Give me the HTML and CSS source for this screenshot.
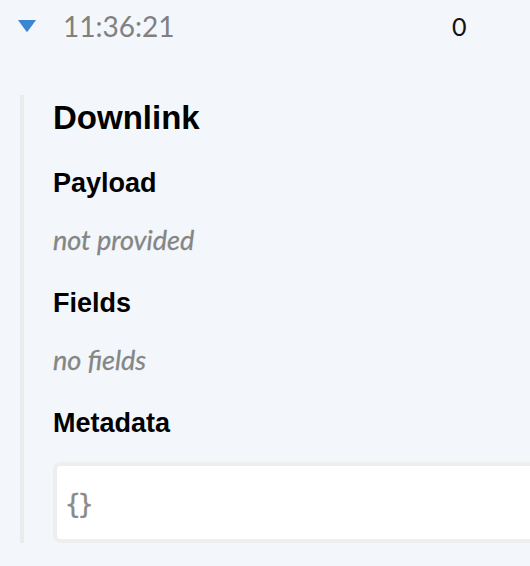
FILE: index.html
```html
<!DOCTYPE html>
<html lang="en">
<head>
    <meta charset="UTF-8">
    <meta name="viewport" content="width=device-width, initial-scale=1.0">
    <title>Downlink</title>
    <link rel="stylesheet" href="styles.css">
</head>
<body>
    <div class="event-row">
        <span class="toggle">
            <svg width="18" height="12" viewBox="0 0 18 12"><path d="M0 0 H18 L9.6 11.4 Q9 12 8.4 11.4 Z" fill="#3a86d4"/></svg>
        </span>
        <span class="time">11:36:21</span>
        <span class="count">0</span>
    </div>

    <div class="details">
        <h2 class="title">Downlink</h2>

        <h3 class="label first">Payload</h3>
        <p class="empty">not provided</p>

        <h3 class="label">Fields</h3>
        <p class="empty">no fields</p>

        <h3 class="label">Metadata</h3>
        <div class="code-box">
            <code>{}</code>
        </div>
    </div>
</body>
</html>
```

FILE: styles.css
```css
body {
    margin: 0;
    background-color: #f3f7fb;
    font-family: "Liberation Sans", Arial, sans-serif;
    overflow: hidden;
}

.event-row {
    display: flex;
    align-items: flex-start;
    padding-top: 13px;
    height: 82px;
    box-sizing: border-box;
}

.toggle {
    width: 18px;
    margin-left: 18px;
    margin-top: 7px;
    line-height: 0;
}

.time {
    margin-left: 27px;
    width: 381px;
    font-family: Lato, sans-serif;
    font-size: 28px;
    line-height: 27px;
    color: #808080;
}

.count {
    margin-left: 8px;
    font-family: Lato, sans-serif;
    font-size: 25px;
    line-height: 27px;
    color: #111;
}

.details {
    margin-left: 20px;
    margin-top: 13px;
    padding: 3px 0 0 29px;
    border-left: 4px solid #ebebeb;
}

.title {
    margin: 0;
    font-size: 33px;
    line-height: 40px;
    font-weight: bold;
    color: #000;
}

.label {
    margin: 31px 0 0;
    font-size: 27px;
    line-height: 32px;
    font-weight: bold;
    color: #000;
}

.label.first {
    margin-top: 29px;
}

.empty {
    margin: 25px 0 0;
    font-family: Lato, sans-serif;
    font-style: italic;
    font-size: 27px;
    line-height: 32px;
    color: #858585;
    -webkit-text-stroke: 0.3px #858585;
}

.code-box {
    margin-top: 23px;
    height: 81px;
    box-sizing: border-box;
    display: flex;
    align-items: center;
    padding-left: 8px;
    background-color: #fff;
    border: 4px solid #eeeeee;
    border-right: none;
    border-radius: 8px 0 0 8px;
}

.code-box code {
    font-family: "DejaVu Sans Mono", monospace;
    font-size: 26px;
    letter-spacing: -3px;
    color: #8a8a8a;
    margin-top: 3px;
    -webkit-text-stroke: 0.4px #8a8a8a;
}
```
